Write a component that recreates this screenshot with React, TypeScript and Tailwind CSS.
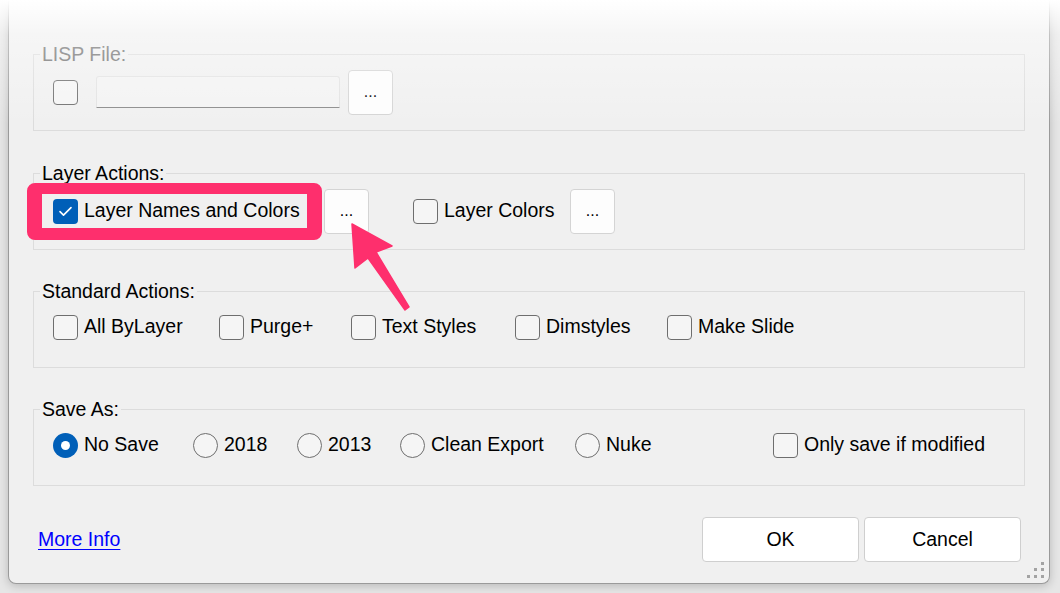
import type { ReactNode } from "react";

const font = "font-['Liberation_Sans',Arial,sans-serif]";

function Checkbox({ checked = false }: { checked?: boolean }) {
  if (checked) {
    return (
      <span className="flex h-[25px] w-[25px] shrink-0 items-center justify-center rounded-[4px] bg-[#005fb8]">
        <svg width="25" height="25" viewBox="0 0 25 25" fill="none">
          <path d="M7 12.6l3.5 3.5 7.5-7.5" stroke="white" strokeWidth="1.6" strokeLinecap="round" strokeLinejoin="round" />
        </svg>
      </span>
    );
  }
  return <span className="h-[25px] w-[25px] shrink-0 rounded-[4px] border border-[#6e6e6e] bg-[#f5f5f5]" />;
}

function Radio({ checked = false }: { checked?: boolean }) {
  if (checked) {
    return (
      <span className="flex h-[25px] w-[25px] shrink-0 items-center justify-center rounded-full bg-[#005fb8]">
        <span className="h-[9px] w-[9px] rounded-full bg-white" />
      </span>
    );
  }
  return <span className="h-[25px] w-[25px] shrink-0 rounded-full border border-[#6e6e6e] bg-[#f5f5f5]" />;
}

function DotsButton() {
  return (
    <button className="flex h-[45px] w-[45px] shrink-0 items-center justify-center rounded-[4px] border border-[#d4d4d4] bg-[#fdfdfd] text-[16px] text-black">
      ...
    </button>
  );
}

function Option({ control, label, width }: { control: ReactNode; label: string; width?: string }) {
  return (
    <div className={`flex shrink-0 items-center gap-[6px] ${width ?? ""}`}>
      {control}
      <span>{label}</span>
    </div>
  );
}

function Group({
  label,
  disabled,
  children,
  tall = true,
}: {
  label: string;
  disabled?: boolean;
  children: ReactNode;
  tall?: boolean;
}) {
  return (
    <div className={`border border-[#dcdcdc] ${tall ? "pb-[15px]" : "pb-[19px]"}`}>
      <div
        className={`-mt-[12px] ml-[6px] w-fit bg-[#f0f0f0] px-[2px] leading-[22px] ${
          disabled ? "text-[#6d6d6d]" : "text-black"
        }`}
      >
        {label}
      </div>
      <div className={`mt-[4px] flex items-center pl-[19px] ${tall ? "h-[46px]" : "h-[42px]"}`}>{children}</div>
    </div>
  );
}

export default function App() {
  return (
    <div className={`relative h-[593px] w-[1060px] overflow-hidden bg-[#e6e6e6] text-[19.5px] text-black ${font}`}>
      {/* dialog */}
      <div className="relative ml-[8px] flex h-[584px] w-[1042px] flex-col rounded-b-[8px] border-x border-b border-[#9a9a9a] bg-[#f0f0f0] px-[24px] pt-[54px] shadow-[0_2px_10px_rgba(0,0,0,0.2)]">
        <Group label="LISP File:" disabled>
          <Checkbox />
          <span className="ml-[18px] h-[32px] w-[244px] shrink-0 rounded-t-[3px] border border-[#e2e2e2] border-b-[#8a8a8a] bg-[#f3f3f3]" />
          <span className="ml-[8px]">
            <DotsButton />
          </span>
        </Group>

        <div className="mt-[42px]">
          <Group label="Layer Actions:">
            <div className="relative flex h-full w-[271px] shrink-0 items-center">
              <Option control={<Checkbox checked />} label="Layer Names and Colors" />
              <span className="pointer-events-none absolute -top-[5px] -bottom-[6px] -left-[26px] right-[2px] rounded-[8px] border-x-[15px] border-t-[11px] border-b-[12px] border-[#fe2f6d]" />
            </div>
            <DotsButton />
            <div className="ml-[44px] flex w-[157px] shrink-0 items-center">
              <Option control={<Checkbox />} label="Layer Colors" />
            </div>
            <DotsButton />
          </Group>
        </div>

        <div className="mt-[41px]">
          <Group label="Standard Actions:" tall={false}>
            <Option control={<Checkbox />} label="All ByLayer" width="w-[166px]" />
            <Option control={<Checkbox />} label="Purge+" width="w-[132px]" />
            <Option control={<Checkbox />} label="Text Styles" width="w-[164px]" />
            <Option control={<Checkbox />} label="Dimstyles" width="w-[152px]" />
            <Option control={<Checkbox />} label="Make Slide" />
          </Group>
        </div>

        <div className="mt-[41px]">
          <Group label="Save As:" tall={false}>
            <Option control={<Radio checked />} label="No Save" width="w-[140px]" />
            <Option control={<Radio />} label="2018" width="w-[104px]" />
            <Option control={<Radio />} label="2013" width="w-[103px]" />
            <Option control={<Radio />} label="Clean Export" width="w-[175px]" />
            <Option control={<Radio />} label="Nuke" width="w-[198px]" />
            <Option control={<Checkbox />} label="Only save if modified" />
          </Group>
        </div>

        <div className="mt-[31px] flex h-[45px] items-center">
          <a href="#" className="ml-[5px] text-[#0000ff] underline underline-offset-[3px]">
            More Info
          </a>
          <div className="ml-auto mr-[4px] flex gap-[5px]">
            <button className="h-[45px] w-[157px] rounded-[4px] border border-[#cfcfcf] bg-white text-black">OK</button>
            <button className="h-[45px] w-[157px] rounded-[4px] border border-[#cfcfcf] bg-white text-black">Cancel</button>
          </div>
        </div>

        {/* resize grip */}
        <svg className="absolute bottom-[4px] right-[4px]" width="18" height="18" viewBox="0 0 18 18">
          <rect x="14" y="1" width="3" height="3" fill="#a3a3a3" />
          <rect x="7" y="7" width="3" height="3" fill="#a3a3a3" />
          <rect x="14" y="7" width="3" height="3" fill="#a3a3a3" />
          <rect x="0" y="14" width="3" height="3" fill="#a3a3a3" />
          <rect x="7" y="14" width="3" height="3" fill="#a3a3a3" />
          <rect x="14" y="14" width="3" height="3" fill="#a3a3a3" />
        </svg>
      </div>

      {/* annotation arrow */}
      <svg className="pointer-events-none absolute left-0 top-0" width="1060" height="593" viewBox="0 0 1060 593">
        <polygon
          points="352,224 392,246 376,252 409,307 405,310 368,258 355,268"
          fill="#fe2f6d"
          stroke="#fe2f6d"
          strokeWidth="1.5"
          strokeLinejoin="round"
        />
      </svg>

      {/* top fade */}
      <div className="pointer-events-none absolute left-0 top-0 h-[125px] w-full bg-linear-to-b from-white via-white/40 via-[28%] to-transparent" />
    </div>
  );
}
